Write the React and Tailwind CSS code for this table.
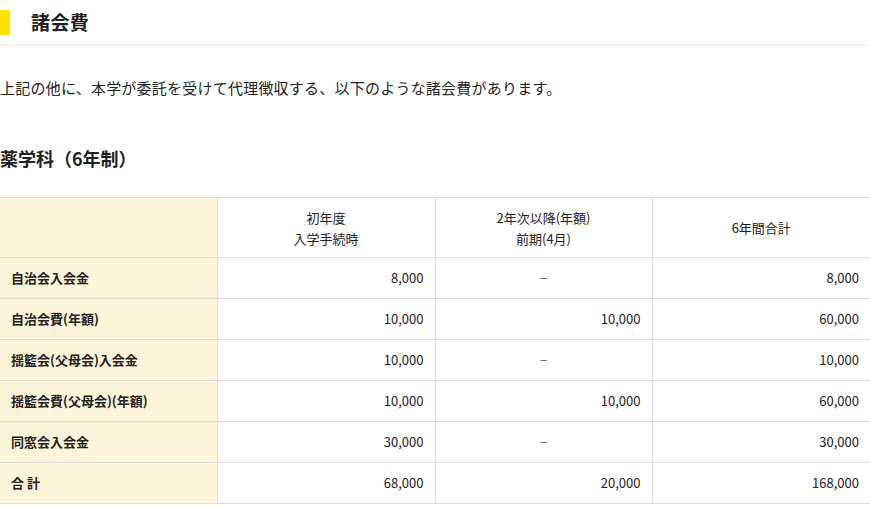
import React from 'react';

const rows = [
    { label: '自治会入会金', first: '8,000', later: null, total: '8,000' },
    { label: '自治会費(年額)', first: '10,000', later: '10,000', total: '60,000' },
    { label: '揺籃会(父母会)入会金', first: '10,000', later: null, total: '10,000' },
    { label: '揺籃会費(父母会)(年額)', first: '10,000', later: '10,000', total: '60,000' },
    { label: '同窓会入会金', first: '30,000', later: null, total: '30,000' },
    { label: '合 計', first: '68,000', later: '20,000', total: '168,000' },
];

export default function App() {
    return (
        <div className="w-[870px] h-[509px] overflow-hidden bg-white text-[#222] font-['Noto_Sans_CJK_JP','Noto_Sans',sans-serif]">
            {/* 見出しバー */}
            <div className="h-[44px] flex items-center bg-white shadow-[0_2px_4px_rgba(0,0,0,0.08)] relative z-10">
                <div className="w-[10px] h-[25px] bg-[#ffe100]"></div>
                <h2 className="ml-[21px] text-[19px] font-bold tracking-[0.02em]">諸会費</h2>
            </div>

            <p className="mt-[32px] text-[15px] leading-[24px] tracking-[0.015em]">
                上記の他に、本学が委託を受けて代理徴収する、以下のような諸会費があります。
            </p>

            <h3 className="mt-[45px] text-[18px] leading-[26px] font-bold">薬学科（6年制）</h3>

            <table className="mt-[26px] w-[870px] table-fixed border-collapse text-[13px]">
                <colgroup>
                    <col className="w-[217px]" />
                    <col className="w-[218px]" />
                    <col className="w-[217px]" />
                    <col className="w-[218px]" />
                </colgroup>
                <thead>
                    <tr className="h-[60px]">
                        <th className="bg-[#fdf5d9] border-y border-r border-[#dcdcdc]"></th>
                        <th className="font-normal text-center leading-[21px] border border-[#dcdcdc]">
                            初年度<br />入学手続時
                        </th>
                        <th className="font-normal text-center leading-[21px] border border-[#dcdcdc]">
                            2年次以降(年額)<br />前期(4月)
                        </th>
                        <th className="font-normal text-center leading-[21px] border-y border-l border-[#dcdcdc]">
                            6年間合計
                        </th>
                    </tr>
                </thead>
                <tbody>
                    {rows.map((r) => (
                        <tr key={r.label} className="h-[41px]">
                            <th className="bg-[#fdf5d9] text-left font-bold pl-[11px] border-y border-r border-[#dcdcdc]">
                                {r.label}
                            </th>
                            <td className="text-right pr-[11px] border border-[#dcdcdc]">{r.first}</td>
                            {r.later ? (
                                <td className="text-right pr-[11px] border border-[#dcdcdc]">{r.later}</td>
                            ) : (
                                <td className="text-center text-[#666] border border-[#dcdcdc]">−</td>
                            )}
                            <td className="text-right pr-[11px] border-y border-l border-[#dcdcdc]">{r.total}</td>
                        </tr>
                    ))}
                </tbody>
            </table>
        </div>
    );
}
